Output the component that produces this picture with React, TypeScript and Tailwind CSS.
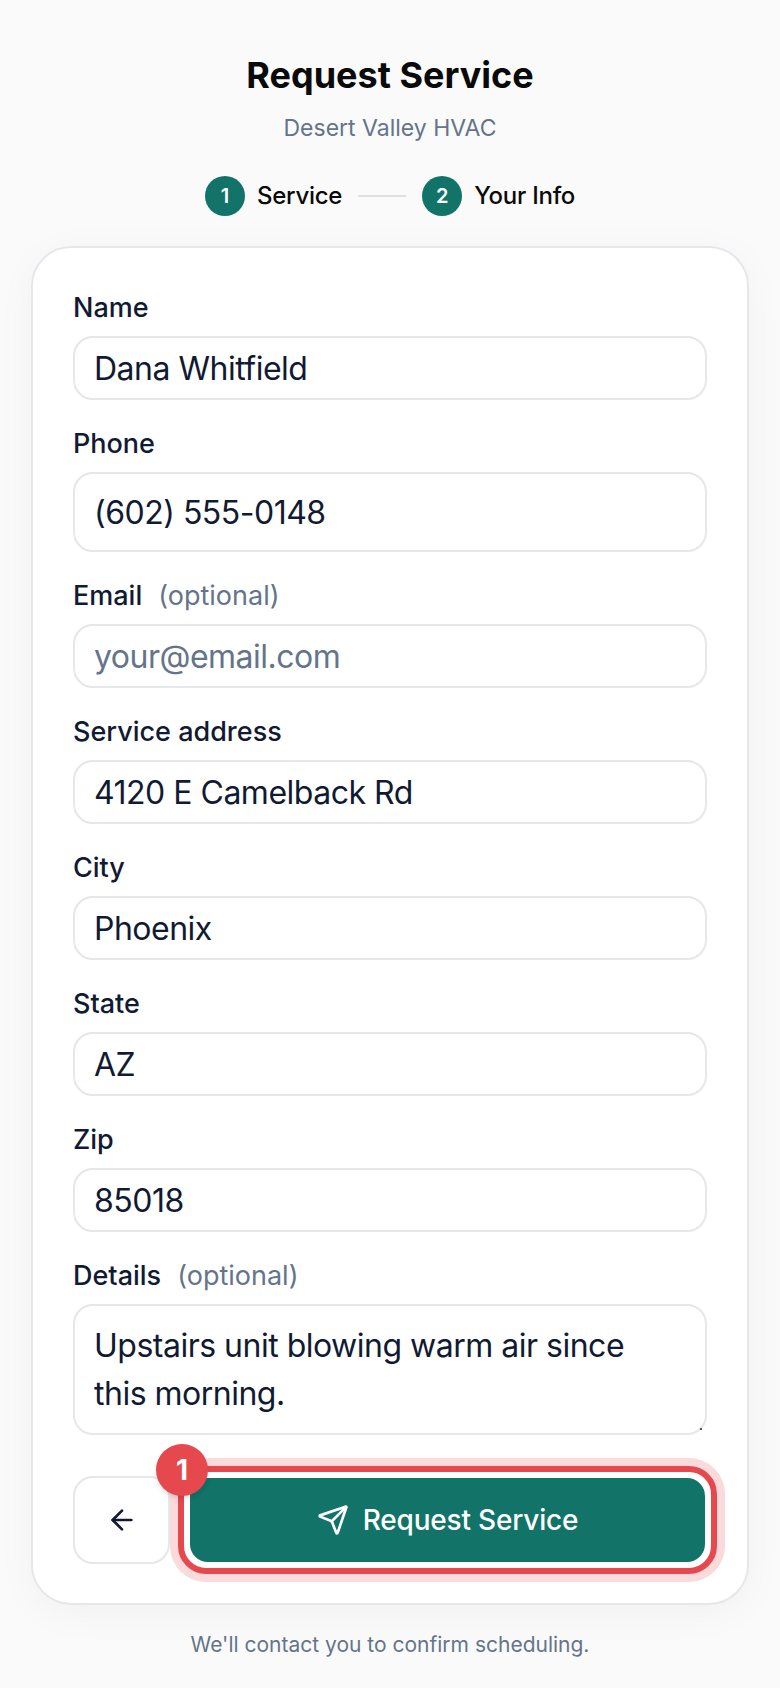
import { ArrowLeft, Send } from "lucide-react";

const inputBox = "w-full rounded-[20px] border-2 border-[#e5e7eb] bg-white px-[19px] text-[#111a33] text-[32px] tracking-[-0.5px]";

function FieldLabel({ label, optional }: { label: string; optional?: boolean }) {
    return (
        <div className="flex h-[36px] items-center gap-[16px] pt-[1px] text-[27px] font-medium text-[#111a33]">
            <span>{label}</span>
            {optional && <span className="font-normal text-[#64748b]">(optional)</span>}
        </div>
    );
}

function Field({ label, optional, value, placeholder, tall }: { label: string; optional?: boolean; value?: string; placeholder?: string; tall?: boolean }) {
    return (
        <div className="flex flex-col gap-[10px]">
            <FieldLabel label={label} optional={optional} />
            <div className={`${inputBox} flex items-center pt-[2px] ${tall ? "h-[80px]" : "h-[64px]"}`}>
                {value ? <span>{value}</span> : <span className="text-[#64748b]">{placeholder}</span>}
            </div>
        </div>
    );
}

function StepDot({ n }: { n: number }) {
    return <span className="flex h-[40px] w-[40px] items-center justify-center rounded-full bg-[#127369] text-[20px] font-semibold text-white">{n}</span>;
}

export default function App() {
    return (
        <div className="h-[1688px] overflow-hidden bg-[#fafafa] px-[31px] pt-[50px] font-['Inter',sans-serif]">
            <h1 className="text-center text-[36px] leading-[50px] font-bold text-[#0a0a0a]">Request Service</h1>
            <p className="mt-[12px] text-center text-[23px] leading-[32px] text-[#64748b]">Desert Valley HVAC</p>
            <div className="mt-[32px] flex items-center justify-center text-[24px] font-medium tracking-[-0.25px] text-[#0a0a0a]">
                <StepDot n={1} />
                <span className="ml-[12px]">Service</span>
                <span className="mx-[16px] h-[2px] w-[48px] bg-[#e0e0e0]"></span>
                <StepDot n={2} />
                <span className="ml-[12px]">Your Info</span>
            </div>
            <div className="mt-[30px] flex flex-col gap-[26px] rounded-[40px] border-2 border-[#e5e7eb] bg-white px-[40px] pt-[42px] pb-[39px] shadow-[0_8px_40px_rgba(0,0,0,0.04)]">
                <Field label="Name" value="Dana Whitfield" />
                <Field label="Phone" value="(602) 555-0148" tall />
                <Field label="Email" optional placeholder="your@email.com" />
                <Field label="Service address" value="4120 E Camelback Rd" />
                <Field label="City" value="Phoenix" />
                <Field label="State" value="AZ" />
                <Field label="Zip" value="85018" />
                <div className="flex flex-col gap-[10px]">
                    <FieldLabel label="Details" optional />
                    <div className={`${inputBox} relative h-[131px] py-[16px] leading-[48px]`}>
                        Upstairs unit blowing warm air since<br />this morning.
                        <span className="absolute right-[3px] bottom-[3px] h-[2px] w-[2px] bg-[#555]"></span>
                    </div>
                </div>
                <div className="mt-[15px] flex gap-[18px]">
                    <button className="flex h-[88px] w-[97px] shrink-0 items-center justify-center rounded-[20px] border-2 border-[#e5e7eb] bg-white text-[#111a33]">
                        <ArrowLeft size={32} strokeWidth={2} />
                    </button>
                    <div className="relative flex-1 p-[2px]">
                        <button className="flex h-[84px] w-full items-center justify-center gap-[14px] rounded-[18px] bg-[#127369] text-[28px] font-medium tracking-[-0.2px] text-white">
                            <Send size={32} strokeWidth={2} />
                            Request Service
                        </button>
                        <div className="pointer-events-none absolute -inset-[10px] rounded-[28px] border-[6px] border-[#e5484d] shadow-[0_0_0_8px_rgba(229,72,77,0.2)]"></div>
                        <span className="absolute -top-[32px] -left-[32px] flex h-[52px] w-[52px] items-center justify-center rounded-full bg-[#e5484d] text-[28px] font-bold text-white shadow-md">1</span>
                    </div>
                </div>
            </div>
            <p className="mt-[25px] text-center text-[21px] leading-[30px] text-[#64748b]">We'll contact you to confirm scheduling.</p>
        </div>
    );
}
